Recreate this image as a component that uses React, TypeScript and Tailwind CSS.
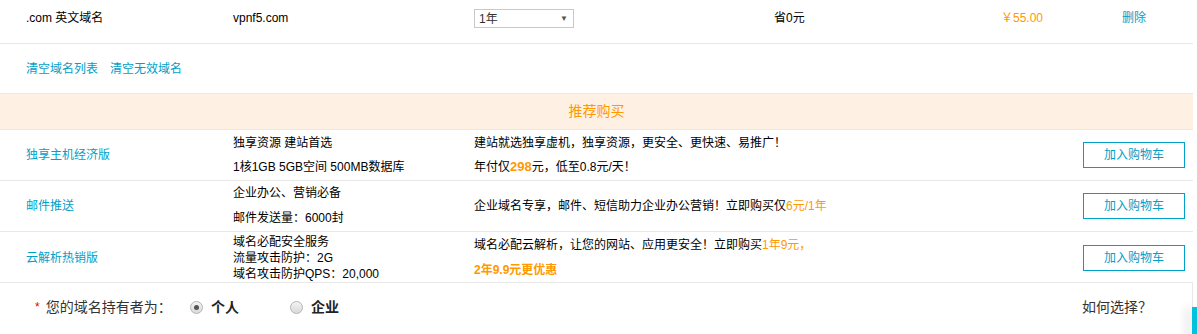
const font = { fontFamily: '"Liberation Sans", "Noto Sans CJK SC", sans-serif' };

const products = [
  {
    name: "独享主机经济版",
    spec: ["独享资源 建站首选", "1核1GB 5GB空间 500MB数据库"],
    specLh: "leading-[24px]",
  },
  {
    name: "邮件推送",
    spec: ["企业办公、营销必备", "邮件发送量：6000封"],
    specLh: "leading-[25px]",
  },
  {
    name: "云解析热销版",
    spec: ["域名必配安全服务", "流量攻击防护：2G", "域名攻击防护QPS：20,000"],
    specLh: "leading-[16px]",
  },
];

function Radio({ checked }: { checked?: boolean }) {
  return (
    <span className="w-[13px] h-[13px] rounded-full border border-[#b5b5b5] bg-gradient-to-b from-[#f4f4f4] to-[#d9d9d9] flex items-center justify-center">
      {checked && <span className="w-[5px] h-[5px] rounded-full bg-[#555]" />}
    </span>
  );
}

function Desc({ idx }: { idx: number }) {
  if (idx === 0)
    return (
      <div className="leading-[24px]">
        <div>建站就选独享虚机，独享资源，更安全、更快速、易推广！</div>
        <div>
          年付仅<b className="text-[#ff9900] text-[13px]">298</b>元，低至0.8元/天！
        </div>
      </div>
    );
  if (idx === 1)
    return (
      <div className="leading-[24px]">
        企业域名专享，邮件、短信助力企业办公营销！立即购买仅<span className="text-[#ff9900]">6元/1年</span>
      </div>
    );
  return (
    <div className="leading-[25px] pt-[1px]">
      <div>
        域名必配云解析，让您的网站、应用更安全！立即购买<span className="text-[#ff9900]">1年9元，</span>
      </div>
      <div className="text-[#ff9900] font-bold">2年9.9元更优惠</div>
    </div>
  );
}

export default function App() {
  return (
    <div className="relative w-[1197px] h-[334px] bg-white overflow-hidden text-[12px] text-black" style={font}>
      <div className="w-[1193px]">
        {/* 域名行 */}
        <div className="grid grid-cols-[233px_241px_300px_227px_121px_1fr] h-[44px] pt-[10px] border-b border-[#e8e8e8] leading-[16px]">
          <div className="pl-[26px]">.com 英文域名</div>
          <div>vpnf5.com</div>
          <div>
            <div className="w-[100px] h-[19px] border border-[#c9c9c9] flex items-center justify-between pl-[4px] pr-[5px] text-[#333] -mt-[1px]">
              <span>1年</span>
              <span className="text-[8px] text-[#555]">▼</span>
            </div>
          </div>
          <div>省0元</div>
          <div className="text-[#ff9900]">￥55.00</div>
          <div className="text-[#00a0c9]">删除</div>
        </div>

        {/* 清空 */}
        <div className="h-[50px] flex items-center gap-[12px] pl-[26px] text-[#00a0c9] border-b border-[#e8e8e8]">
          <span>清空域名列表</span>
          <span>清空无效域名</span>
        </div>

        {/* 推荐购买 */}
        <div className="h-[36px] bg-[#fef1e3] flex items-center justify-center text-[14px] text-[#ff9900] border-b border-[#e8e8e8]">
          推荐购买
        </div>

        {products.map((p, i) => (
          <div
            key={i}
            className="grid grid-cols-[233px_241px_609px_1fr] h-[51px] border-b border-[#e8e8e8] items-center"
          >
            <div className="pl-[26px] text-[#00a0c9]">{p.name}</div>
            <div className={p.specLh}>
              {p.spec.map((s) => (
                <div key={s}>{s}</div>
              ))}
            </div>
            <Desc idx={i} />
            <div>
              <button className="w-[102px] h-[26px] border border-[#00a0c9] text-[#00a0c9] text-[12px] flex items-center justify-center">
                加入购物车
              </button>
            </div>
          </div>
        ))}

        {/* 持有者 */}
        <div className="h-[60px] border-r border-[#e8e8e8] flex items-start pt-[16px] text-[14px] leading-[16px] text-[#333]">
          <div className="pl-[35px] w-[190px] flex items-center">
            <span className="text-[#e00] text-[12px] mr-[6px]">*</span>
            您的域名持有者为：
          </div>
          <div className="flex items-center gap-[8px] w-[100px]">
            <Radio checked />
            <b className="text-[#222]">个人</b>
          </div>
          <div className="flex items-center gap-[8px]">
            <Radio />
            <b className="text-[#222]">企业</b>
          </div>
          <div className="ml-auto w-[110px]">如何选择？</div>
        </div>
      </div>

      {/* 右侧浮动条 */}
      <div className="absolute right-0 top-[307px] w-[5px] h-[40px] bg-[#00c1de] shadow-[-6px_0_10px_rgba(0,0,0,0.12)]" />
    </div>
  );
}
